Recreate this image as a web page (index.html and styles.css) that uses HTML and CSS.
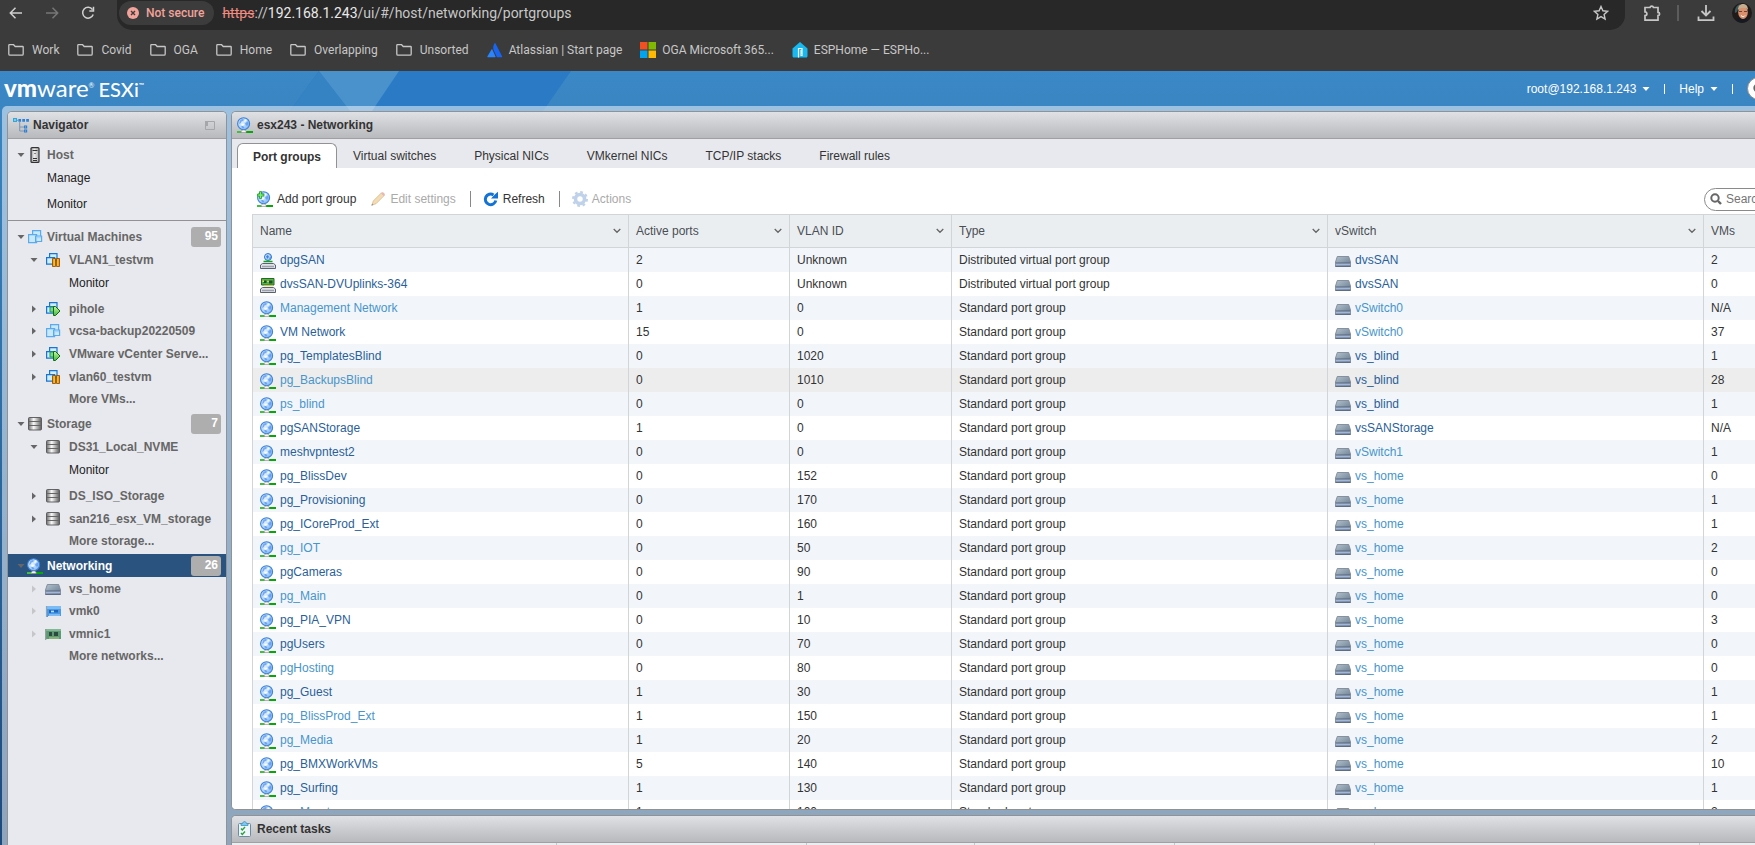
FILE: index.html
```html
<!DOCTYPE html>
<html lang="en">
<head>
<meta charset="utf-8">
<title>esx243 - Networking</title>
<link rel="stylesheet" href="styles.css">
</head>
<body>
<svg class="defs" aria-hidden="true">
  <defs>
    <radialGradient id="gGlobe" cx=".35" cy=".4" r=".75"><stop offset="0" stop-color="#e4f2ff"/><stop offset=".55" stop-color="#a9d2fb"/><stop offset="1" stop-color="#6faaf2"/></radialGradient>
    <linearGradient id="gDisk" x1="0" x2="1" y1="0" y2="0"><stop offset="0" stop-color="#6b6b6b"/><stop offset=".4" stop-color="#fafafa"/><stop offset="1" stop-color="#5c5c5c"/></linearGradient>
    <linearGradient id="gSwitch" x1="0" x2="1" y1="0" y2="1"><stop offset="0" stop-color="#b4c2ce"/><stop offset="1" stop-color="#64788c"/></linearGradient>
    <linearGradient id="gHost" x1="0" x2="1" y1="0" y2="0"><stop offset="0" stop-color="#999"/><stop offset=".4" stop-color="#eee"/><stop offset="1" stop-color="#aaa"/></linearGradient>
    <linearGradient id="gOrange" x1="0" x2="1" y1="0" y2="0"><stop offset="0" stop-color="#f09800"/><stop offset=".5" stop-color="#ffd64a"/><stop offset="1" stop-color="#f09000"/></linearGradient>
    <linearGradient id="gGreen" x1="0" x2="0" y1="0" y2="1"><stop offset="0" stop-color="#c8f5a0"/><stop offset="1" stop-color="#3fba3f"/></linearGradient>
    <symbol id="globe" viewBox="0 0 16 16"><circle cx="6.600" cy="6.700" r="6" fill="url(#gGlobe)" stroke="#3d82d6" stroke-width="1.100"/><path d="M3 3.500 5 2 7 2.500 6 4 4.500 4.500 4 6 2 7zM8 6.500 10.500 4.500 11.500 6.500 10.500 8.500 9 8.500zM4 9.500 6 8.800 7.500 11 5.500 11.500z" fill="#5a93ea" opacity=".75"/><path d="m8 2 2 1-1 1.500-2 .5zM4 7l3-.5.5 1.500L5 9z" fill="#fff" opacity=".85"/><path d="M0 14h5v2H0z" fill="#3fc03f"/><path d="M9 14h7v2H9z" fill="#06a806"/><path d="M4.200 14.600 5.300 13h2.700l1.100 1.600v.9H4.200z" fill="#f4f4f4" stroke="#888" stroke-width=".6"/></symbol>
    <symbol id="globe-add" viewBox="0 0 16 16"><use href="#globe" x="0" y="0" width="16" height="16"/><path d="M2.500 .6h2v2.500h2.400v2H4.500v2.400h-2V5.100H.4v-2h2.100z" fill="#7cec7c" stroke="#1e9a1e" stroke-width=".8"/></symbol>
    <symbol id="dpg" viewBox="0 0 16 16"><circle cx="8" cy="4" r="3.500" fill="url(#gGlobe)" stroke="#2f74c8"/><path d="m6 3 2-1 1 2-2 2zM9 5l2-1-1 2z" fill="#3f7fe0"/><path d="M3.500 8.500h9" stroke="#15a315" stroke-width="1.500"/><path d="M2.500 10.500h11l2 1.500v3.500H.5V12z" fill="#dfe2e8" stroke="#5a6170"/><path d="M2.500 13.500h11" stroke="#5a6070" stroke-width="1.600" stroke-dasharray="1 1"/></symbol>
    <symbol id="uplink" viewBox="0 0 16 16"><path d="M1.500 1.500h12.500v6.500H1.500z" fill="#57b34b" stroke="#256b20"/><path d="M3.500 3.500h3v2.500h-3zM9 3.500h3.500v3H9z" fill="#1d4f2a"/><path d="M2.500 3.500h1.500v1.500H2.500z" fill="#e6e95b"/><path d="M7 4.500h2M4 8.800h9" stroke="#e6c94b"/><path d="M2.500 10.500h11l2 1.500v3.500H.5V12z" fill="#dfe2e8" stroke="#5a6170"/><path d="M2.500 13.500h11" stroke="#5a6070" stroke-width="1.600" stroke-dasharray="1 1"/></symbol>
    <symbol id="switch" viewBox="0 0 16 16"><path d="M2.300 3.500h11.400L15.500 9v4.500H.5V9z" fill="url(#gSwitch)" stroke="#7d8996" stroke-width=".9"/><path d="M.8 10h14.400v2.500H.8z" fill="#a3b6da"/><path d="M.5 13.300h15M.8 10h14.400" stroke="#56657a" stroke-width="1"/></symbol>
    <symbol id="vm" viewBox="0 0 16 16"><g fill="#c8e8fb" stroke="#5aaaf0" stroke-width="1.200"><path d="M5.600 1.600h8v7h-8z"/><path d="M1.600 5.600h8v8h-8z"/><path d="M8.600 7h6v5.500h-6z" fill-opacity=".7"/></g></symbol>
    <symbol id="vm-base" viewBox="0 0 16 16"><g fill="#cdeefa" stroke="#1b74d0" stroke-width="1.200"><path d="M4.600 1.600h7.400v7H4.600z"/><path d="M1.600 5.600h8v6.500h-8z"/></g></symbol>
    <symbol id="vm-pause" viewBox="0 0 16 16"><use href="#vm-base"/><path d="M7.500 6.500h3v8h-3zM11.500 6.500h3v8h-3z" fill="url(#gOrange)" stroke="#8a4400" stroke-width=".8"/></symbol>
    <symbol id="vm-play" viewBox="0 0 16 16"><use href="#vm-base"/><path d="M5 6h5v5H5z" fill="#7ad98e" stroke="#1c9a60"/><path d="M8.500 5.500h2l4.500 4.500-4.500 4.500h-2z" fill="url(#gGreen)" stroke="#0e6b14"/></symbol>
    <symbol id="disk" viewBox="0 0 16 16"><rect x="1.500" y="1.500" width="13" height="12.500" rx="1" fill="url(#gDisk)" stroke="#555" stroke-width=".9"/><path d="M2 5.500h12M2 9.500h12" stroke="#666"/></symbol>
    <symbol id="host" viewBox="0 0 16 16"><rect x="4" y=".6" width="8" height="14.800" rx="1" fill="url(#gHost)" stroke="#333" stroke-width="1.200"/><path d="M5.500 3.500h5M6 11.500h4M6 13.500h4" stroke="#333"/><path d="M7.500 6h1v1h-1z" fill="#222"/></symbol>
    <symbol id="vmk" viewBox="0 0 16 16"><path d="M1 3h15v10H3v1H1z" fill="#4a9ae6"/><path d="M1 3h15v3H1z" fill="#7cbcf2"/><path d="M4 7h2v3H4zM9 7h4v2.500H9z" fill="#1f64b8"/><path d="M6 8.500h3M4 12h11" stroke="#b6dcff"/><path d="M1.500 3v11" stroke="#90a4b8" stroke-width="1.200"/></symbol>
    <symbol id="vmnic" viewBox="0 0 16 16"><path d="M1 3h15v10H1z" fill="#5b9a73"/><path d="M1 3h15v2H1z" fill="#84b894"/><path d="M4 6h3v4H4zM9 6h4v4H9z" fill="#2c4a40"/><path d="M4 12h10" stroke="#b9c97a"/><path d="M.7 3v11" stroke="#8a9a94" stroke-width="1.200"/></symbol>
    <symbol id="folder" viewBox="0 0 16 16"><path d="M.8 12V3.300c0-.4.300-.6.600-.6h4.200l1.600 1.800h7.400c.4 0 .6.300.6.600V12c0 .7-.4 1.200-1.100 1.200H1.900C1.200 13.200.8 12.700.8 12z" fill="none" stroke="#c7c7c7" stroke-width="1.300"/></symbol>
    <symbol id="chevron" viewBox="0 0 8 6"><path d="M.7 1 4 4.300 7.300 1" fill="none" stroke="#666" stroke-width="1.300"/></symbol>
    <symbol id="down" viewBox="0 0 8 8"><path d="M.5 2h7L4 6z" fill="currentColor"/></symbol>
    <symbol id="right" viewBox="0 0 8 8"><path d="M2 .5v7l4-3.500z" fill="currentColor"/></symbol>
    <symbol id="lens" viewBox="0 0 12 12"><circle cx="5" cy="5" r="3.700" fill="none" stroke="#666" stroke-width="2"/><path d="m8 8 3 3" stroke="#666" stroke-width="2.400"/></symbol>
  </defs>
</svg>

<header class="browser">
  <div class="toolbar">
    <button class="nav-btn" aria-label="Back"><svg viewBox="0 0 14 14"><path d="M13 7H1.500M6.500 1.800 1.300 7l5.200 5.200" fill="none" stroke="#d0d0d0" stroke-width="1.500"/></svg></button>
    <button class="nav-btn" aria-label="Forward" disabled><svg viewBox="0 0 14 14"><path d="M1 7h11.500M7.500 1.800 12.700 7l-5.200 5.200" fill="none" stroke="#777" stroke-width="1.500"/></svg></button>
    <button class="nav-btn" aria-label="Reload"><svg viewBox="0 0 14 14"><path d="M12.200 8.500A5.400 5.400 0 1 1 11.500 3.600M12.500.8v4.200H8.300" fill="none" stroke="#d0d0d0" stroke-width="1.500"/></svg></button>
    <div class="omnibox">
      <button class="secure-chip"><svg viewBox="0 0 12 12"><circle cx="6" cy="6" r="6" fill="#f2a39a"/><path d="m4 4 4 4M8 4 4 8" stroke="#3c3c3c" stroke-width="1.400"/></svg>Not secure</button>
      <div class="url"><s>https</s>://<span class="domain">192.168.1.243</span>/ui/#/host/networking/portgroups</div>
      <button class="star" aria-label="Bookmark this page"><svg viewBox="0 0 16 16"><path d="m8 1.500 1.900 4.300 4.700.5-3.500 3.100 1 4.600L8 11.600 3.900 14l1-4.600L1.400 6.300l4.700-.5z" fill="none" stroke="#c7c7c7" stroke-width="1.400"/></svg></button>
    </div>
    <button class="tool" aria-label="Extensions"><svg viewBox="0 0 18 18"><path d="M2 3.500h5a1.800 1.800 0 0 1 3.500 0H15v4.800a1.600 1.600 0 0 1 0 3.200v4.700H2v-4.500a1.900 1.900 0 0 0 0-3.800z" fill="none" stroke="#c7c7c7" stroke-width="1.700"/></svg></button>
    <span class="tool-sep"></span>
    <button class="tool" aria-label="Downloads"><svg viewBox="0 0 18 18"><path d="M9 1v10M4.500 7 9 11.500 13.500 7M1.500 12.500v3.700h15v-3.700" fill="none" stroke="#c7c7c7" stroke-width="1.800"/></svg></button>
    <button class="avatar" aria-label="Profile"><svg viewBox="0 0 20 20"><circle cx="10" cy="10" r="10" fill="#1f1b1a"/><path d="M3 10c-1-4 2-8 5-9l-3 8z" fill="#3d5a5c"/><path d="M4 17.500c1-2 3-3 6-3s5 1 6 3a10 10 0 0 1-12 0z" fill="#151a22"/><ellipse cx="11" cy="9.500" rx="4.800" ry="6.500" fill="#d9906c"/><path d="M6 7c0-4 2-6 5-6s5 2 5 6c-2-3-7-3-10 0z" fill="#c4ad8e"/><path d="M7 8.500h3M12 8.500h3" stroke="#6a4238"/><path d="M9 12.500c1.500 1.500 3 1.500 4 0" stroke="#fff" fill="none"/></svg></button>
  </div>
  <nav class="bookmarks" aria-label="Bookmarks">
    <a href="#"><svg><use href="#folder"/></svg>Work</a>
    <a href="#"><svg><use href="#folder"/></svg>Covid</a>
    <a href="#"><svg><use href="#folder"/></svg>OGA</a>
    <a href="#"><svg><use href="#folder"/></svg>Home</a>
    <a href="#"><svg><use href="#folder"/></svg>Overlapping</a>
    <a href="#"><svg><use href="#folder"/></svg>Unsorted</a>
    <a class="site" href="#"><svg viewBox="0 0 16 16"><path d="M4.500 7.500c.3-.3.600-.2.800.1l3.200 7c.1.300 0 .6-.4.600H.8c-.4 0-.6-.3-.4-.7z" fill="#2a86ff"/><path d="M7.600 1.200c-1.800 2.800-1.700 5.500-.6 7.800l2.900 5.900c.1.200.3.300.5.300h4.300c.4 0 .6-.4.500-.7L8.400 1.200c-.2-.3-.6-.3-.8 0z" fill="#1765f0"/></svg>Atlassian | Start page</a>
    <a class="site" href="#"><svg viewBox="0 0 16 16"><path d="M0 0h7.500v7.500H0z" fill="#f25022"/><path d="M8.500 0H16v7.500H8.500z" fill="#7fba00"/><path d="M0 8.500h7.500V16H0z" fill="#00a4ef"/><path d="M8.500 8.500H16V16H8.500z" fill="#ffb900"/></svg>OGA Microsoft 365...</a>
    <a class="site" href="#"><svg viewBox="0 0 16 16"><path d="M8 0 .5 6.500V14c0 .8.500 1.500 1.300 1.500h12.400c.8 0 1.300-.7 1.300-1.500V6.500z" fill="#19b8ee"/><path d="M6.500 15.500V6.500H10v7h-1M8 9h2M8 11h2M8 13h1" fill="none" stroke="#fff" stroke-width="1.200"/></svg>ESPHome — ESPHo...</a>
  </nav>
</header>

<div class="app">
  <svg class="facets" viewBox="0 0 600 40" aria-hidden="true"><path d="M319 0H571L543 40H290z" fill="#2a7ac5"/><path d="M319 0 290 40H350z" fill="#3583c3"/><path d="M319 0H399L372 40H350z" fill="#4a92cc"/></svg>
  <header class="masthead">
    <div class="logo"><span class="logo-vm"><b>vm</b>ware<sup>®</sup></span> <span class="logo-esx">ESXi<sup>™</sup></span></div>
    <div class="session">
      <button>root@192.168.1.243<svg><use href="#down"/></svg></button><i></i>
      <button>Help<svg><use href="#down"/></svg></button><i></i>
      <label class="pill"><svg><use href="#lens"/></svg><input type="search" aria-label="Search inventory" placeholder="Search"></label>
    </div>
  </header>

  <div class="frame">
    <aside class="panel navigator">
      <h2 class="panel-title"><svg viewBox="0 0 16 16"><g fill="none" stroke="#2b7fd4" stroke-width="1.200"><path d="M.6 1.600h2.800v2.800H.6z" stroke="#29abe2"/><path d="M6 2.600h1.500v1.500H6zM9.900 2.600h1.500v1.500H9.900zM13.800 2.600h1.500v1.500h-1.500zM11.600 9h2v2h-2zM11.600 13h2v2h-2z"/></g><path d="M4 3.300h2M6.700 5v9h4.500M6.700 10h4.500" fill="none" stroke="#7d96b4"/></svg>Navigator<button class="dock" aria-label="Collapse navigator"><svg viewBox="0 0 10 9"><path d="M.5.5h9v8h-9z" fill="none" stroke="#a4a6aa"/><path d="M0 0h3v5H0z" fill="#a4a6aa"/></svg></button></h2>
      <div class="tree host-tree">
        <div class="row"><svg class="caret"><use href="#down"/></svg><svg class="icon"><use href="#host"/></svg><a href="#">Host</a></div>
        <div class="row leaf"><a href="#">Manage</a></div>
        <div class="row leaf last"><a href="#">Monitor</a></div>
      </div>
      <div class="tree">
        <div class="row"><svg class="caret"><use href="#down"/></svg><svg class="icon"><use href="#vm"/></svg><a href="#">Virtual Machines</a><span class="badge">95</span></div>
        <div class="row sub"><svg class="caret"><use href="#down"/></svg><svg class="icon"><use href="#vm-pause"/></svg><a href="#">VLAN1_testvm</a></div>
        <div class="row sub leaf"><a href="#">Monitor</a></div>
        <div class="row sub"><svg class="caret"><use href="#right"/></svg><svg class="icon"><use href="#vm-play"/></svg><a href="#">pihole</a></div>
        <div class="row sub tight"><svg class="caret"><use href="#right"/></svg><svg class="icon"><use href="#vm"/></svg><a href="#">vcsa-backup20220509</a></div>
        <div class="row sub"><svg class="caret"><use href="#right"/></svg><svg class="icon"><use href="#vm-play"/></svg><a href="#">VMware vCenter Serve...</a></div>
        <div class="row sub"><svg class="caret"><use href="#right"/></svg><svg class="icon"><use href="#vm-pause"/></svg><a href="#">vlan60_testvm</a></div>
        <div class="row sub more tight"><a href="#">More VMs...</a></div>
      </div>
      <div class="tree">
        <div class="row"><svg class="caret"><use href="#down"/></svg><svg class="icon"><use href="#disk"/></svg><a href="#">Storage</a><span class="badge">7</span></div>
        <div class="row sub"><svg class="caret"><use href="#down"/></svg><svg class="icon"><use href="#disk"/></svg><a href="#">DS31_Local_NVME</a></div>
        <div class="row sub leaf"><a href="#">Monitor</a></div>
        <div class="row sub"><svg class="caret"><use href="#right"/></svg><svg class="icon"><use href="#disk"/></svg><a href="#">DS_ISO_Storage</a></div>
        <div class="row sub"><svg class="caret"><use href="#right"/></svg><svg class="icon"><use href="#disk"/></svg><a href="#">san216_esx_VM_storage</a></div>
        <div class="row sub more tight"><a href="#">More storage...</a></div>
      </div>
      <div class="tree faint">
        <div class="row selected"><svg class="caret"><use href="#down"/></svg><svg class="icon"><use href="#globe"/></svg><a href="#">Networking</a><span class="badge">26</span></div>
        <div class="row sub"><svg class="caret"><use href="#right"/></svg><svg class="icon"><use href="#switch"/></svg><a href="#">vs_home</a></div>
        <div class="row sub tight"><svg class="caret"><use href="#right"/></svg><svg class="icon"><use href="#vmk"/></svg><a href="#">vmk0</a></div>
        <div class="row sub"><svg class="caret"><use href="#right"/></svg><svg class="icon"><use href="#vmnic"/></svg><a href="#">vmnic1</a></div>
        <div class="row sub more tight"><a href="#">More networks...</a></div>
      </div>
    </aside>

    <div class="workspace">
      <main class="panel content">
        <h1 class="panel-title"><svg><use href="#globe"/></svg>esx243 - Networking</h1>
        <div class="tabs" role="tablist">
          <button role="tab" aria-selected="true" class="active">Port groups</button>
          <button role="tab">Virtual switches</button>
          <button role="tab">Physical NICs</button>
          <button role="tab">VMkernel NICs</button>
          <button role="tab">TCP/IP stacks</button>
          <button role="tab">Firewall rules</button>
        </div>
        <div class="view">
          <div class="actions">
            <button><svg><use href="#globe-add"/></svg>Add port group</button>
            <button disabled><svg viewBox="0 0 16 16"><path d="m2 14 1.300-4L11.500 1.800l2.700 2.700L6 12.700z" fill="#f3dcb4" stroke="#d9b98a" stroke-width=".8"/><path d="m11 2.300 1-1c1-.8 3.500 1.500 2.700 2.700l-1 1z" fill="#e9b6b6"/><path d="m1.300 14.800.8-2 1.200 1.200z" fill="#888"/></svg>Edit settings</button><i></i>
            <button><svg viewBox="0 0 16 16"><path d="M12.800 9.500A5.300 5.300 0 1 1 10.500 3.900" fill="none" stroke="#1272d6" stroke-width="3"/><path d="M8 7.500h7V.8L12.300 3z" fill="#1272d6"/></svg>Refresh</button><i></i>
            <button disabled><svg viewBox="0 0 16 16"><circle cx="8" cy="8" r="4.500" fill="none" stroke="#c0d2ea" stroke-width="3.600"/><circle cx="8" cy="8" r="6.800" fill="none" stroke="#c0d2ea" stroke-width="2.400" stroke-dasharray="2.670 2.670"/></svg>Actions</button>
            <label class="pill"><svg><use href="#lens"/></svg><input type="search" aria-label="Search port groups" placeholder="Search"></label>
          </div>
          <table class="grid">
            <colgroup><col class="wide"><col class="ports"><col class="vlan"><col class="wide"><col class="wide"><col></colgroup>
            <thead><tr><th>Name<svg><use href="#chevron"/></svg></th><th>Active ports<svg><use href="#chevron"/></svg></th><th>VLAN ID<svg><use href="#chevron"/></svg></th><th>Type<svg><use href="#chevron"/></svg></th><th>vSwitch<svg><use href="#chevron"/></svg></th><th>VMs</th></tr></thead>
            <tbody>
              <tr><td><svg><use href="#dpg"/></svg><a href="#">dpgSAN</a></td><td>2</td><td>Unknown</td><td>Distributed virtual port group</td><td><svg><use href="#switch"/></svg><a href="#">dvsSAN</a></td><td>2</td></tr>
              <tr><td><svg><use href="#uplink"/></svg><a href="#">dvsSAN-DVUplinks-364</a></td><td>0</td><td>Unknown</td><td>Distributed virtual port group</td><td><svg><use href="#switch"/></svg><a href="#">dvsSAN</a></td><td>0</td></tr>
              <tr><td><svg><use href="#globe"/></svg><a class="lit" href="#">Management Network</a></td><td>1</td><td>0</td><td>Standard port group</td><td><svg><use href="#switch"/></svg><a class="lit" href="#">vSwitch0</a></td><td>N/A</td></tr>
              <tr><td><svg><use href="#globe"/></svg><a href="#">VM Network</a></td><td>15</td><td>0</td><td>Standard port group</td><td><svg><use href="#switch"/></svg><a class="lit" href="#">vSwitch0</a></td><td>37</td></tr>
              <tr><td><svg><use href="#globe"/></svg><a href="#">pg_TemplatesBlind</a></td><td>0</td><td>1020</td><td>Standard port group</td><td><svg><use href="#switch"/></svg><a href="#">vs_blind</a></td><td>1</td></tr>
              <tr class="hover"><td><svg><use href="#globe"/></svg><a class="lit" href="#">pg_BackupsBlind</a></td><td>0</td><td>1010</td><td>Standard port group</td><td><svg><use href="#switch"/></svg><a href="#">vs_blind</a></td><td>28</td></tr>
              <tr><td><svg><use href="#globe"/></svg><a class="lit" href="#">ps_blind</a></td><td>0</td><td>0</td><td>Standard port group</td><td><svg><use href="#switch"/></svg><a href="#">vs_blind</a></td><td>1</td></tr>
              <tr><td><svg><use href="#globe"/></svg><a href="#">pgSANStorage</a></td><td>1</td><td>0</td><td>Standard port group</td><td><svg><use href="#switch"/></svg><a href="#">vsSANStorage</a></td><td>N/A</td></tr>
              <tr><td><svg><use href="#globe"/></svg><a href="#">meshvpntest2</a></td><td>0</td><td>0</td><td>Standard port group</td><td><svg><use href="#switch"/></svg><a class="lit" href="#">vSwitch1</a></td><td>1</td></tr>
              <tr><td><svg><use href="#globe"/></svg><a href="#">pg_BlissDev</a></td><td>0</td><td>152</td><td>Standard port group</td><td><svg><use href="#switch"/></svg><a class="lit" href="#">vs_home</a></td><td>0</td></tr>
              <tr><td><svg><use href="#globe"/></svg><a href="#">pg_Provisioning</a></td><td>0</td><td>170</td><td>Standard port group</td><td><svg><use href="#switch"/></svg><a class="lit" href="#">vs_home</a></td><td>1</td></tr>
              <tr><td><svg><use href="#globe"/></svg><a href="#">pg_ICoreProd_Ext</a></td><td>0</td><td>160</td><td>Standard port group</td><td><svg><use href="#switch"/></svg><a class="lit" href="#">vs_home</a></td><td>1</td></tr>
              <tr><td><svg><use href="#globe"/></svg><a class="lit" href="#">pg_IOT</a></td><td>0</td><td>50</td><td>Standard port group</td><td><svg><use href="#switch"/></svg><a class="lit" href="#">vs_home</a></td><td>2</td></tr>
              <tr><td><svg><use href="#globe"/></svg><a href="#">pgCameras</a></td><td>0</td><td>90</td><td>Standard port group</td><td><svg><use href="#switch"/></svg><a class="lit" href="#">vs_home</a></td><td>0</td></tr>
              <tr><td><svg><use href="#globe"/></svg><a class="lit" href="#">pg_Main</a></td><td>0</td><td>1</td><td>Standard port group</td><td><svg><use href="#switch"/></svg><a class="lit" href="#">vs_home</a></td><td>0</td></tr>
              <tr><td><svg><use href="#globe"/></svg><a href="#">pg_PIA_VPN</a></td><td>0</td><td>10</td><td>Standard port group</td><td><svg><use href="#switch"/></svg><a class="lit" href="#">vs_home</a></td><td>3</td></tr>
              <tr><td><svg><use href="#globe"/></svg><a href="#">pgUsers</a></td><td>0</td><td>70</td><td>Standard port group</td><td><svg><use href="#switch"/></svg><a class="lit" href="#">vs_home</a></td><td>0</td></tr>
              <tr><td><svg><use href="#globe"/></svg><a class="lit" href="#">pgHosting</a></td><td>0</td><td>80</td><td>Standard port group</td><td><svg><use href="#switch"/></svg><a class="lit" href="#">vs_home</a></td><td>0</td></tr>
              <tr><td><svg><use href="#globe"/></svg><a href="#">pg_Guest</a></td><td>1</td><td>30</td><td>Standard port group</td><td><svg><use href="#switch"/></svg><a class="lit" href="#">vs_home</a></td><td>1</td></tr>
              <tr><td><svg><use href="#globe"/></svg><a class="lit" href="#">pg_BlissProd_Ext</a></td><td>1</td><td>150</td><td>Standard port group</td><td><svg><use href="#switch"/></svg><a class="lit" href="#">vs_home</a></td><td>1</td></tr>
              <tr><td><svg><use href="#globe"/></svg><a class="lit" href="#">pg_Media</a></td><td>1</td><td>20</td><td>Standard port group</td><td><svg><use href="#switch"/></svg><a class="lit" href="#">vs_home</a></td><td>2</td></tr>
              <tr><td><svg><use href="#globe"/></svg><a href="#">pg_BMXWorkVMs</a></td><td>5</td><td>140</td><td>Standard port group</td><td><svg><use href="#switch"/></svg><a class="lit" href="#">vs_home</a></td><td>10</td></tr>
              <tr><td><svg><use href="#globe"/></svg><a href="#">pg_Surfing</a></td><td>1</td><td>130</td><td>Standard port group</td><td><svg><use href="#switch"/></svg><a class="lit" href="#">vs_home</a></td><td>1</td></tr>
              <tr><td><svg><use href="#globe"/></svg><a class="lit" href="#">pg_Mgmt</a></td><td>1</td><td>100</td><td>Standard port group</td><td><svg><use href="#switch"/></svg><a class="lit" href="#">vs_home</a></td><td>2</td></tr>
            </tbody>
          </table>
        </div>
      </main>
      <section class="panel tasks">
        <h2 class="panel-title"><svg viewBox="0 0 16 16"><rect x="1.500" y="2.500" width="12" height="13" rx="1" fill="#eef6fb" stroke="#6c8aa0"/><path d="M4 4.500V3l2-1c0-2 3-2 3 0l2 1v1.500z" fill="#7cc8ee" stroke="#3f94c4" stroke-width=".8"/><path d="m4 7.500 1.300 1.500L8 6M4 12l1.300 1.500L8 10.500" fill="none" stroke="#2aa33c" stroke-width="1.400"/></svg>Recent tasks</h2>
        <div class="task-columns"><span class="c1"></span><span class="c2"></span><span class="c3"></span><span class="c4"></span><span class="c4"></span><span class="c1"></span></div>
      </section>
    </div>
  </div>
</div>
</body>
</html>
```
FILE: styles.css
```css
* { box-sizing: border-box; }
body {
  margin: 0;
  height: 100vh;
  overflow: hidden;
  display: flex;
  flex-direction: column;
  font: 12px/16px "Liberation Sans", Arial, sans-serif;
  color: #333;
}
.defs { position: absolute; width: 0; height: 0; }
svg { display: block; flex: none; width: 16px; height: 16px; }
a { color: inherit; text-decoration: none; }
button { font: inherit; color: inherit; background: none; border: 0; padding: 0; }

/* Browser chrome */
.browser {
  flex: none;
  background: #3b3b3b;
  color: #c7c7c7;
  font-family: Roboto, "Open Sans", sans-serif;
}
.toolbar { display: flex; align-items: flex-start; height: 30px; padding-left: 9px; }
.nav-btn { width: 36px; height: 26px; flex: none; }
.nav-btn svg { width: 14px; height: 14px; }
.omnibox {
  flex: 1;
  display: flex;
  align-items: center;
  height: 30px;
  padding: 0 16px 4px 2px;
  background: #282828;
  border-radius: 0 0 15px 15px;
}
.secure-chip {
  display: flex;
  align-items: center;
  gap: 7px;
  height: 24px;
  padding: 0 10px 0 8px;
  border-radius: 12px;
  background: #3c3c3c;
  color: #f2a39a;
  font-weight: 500;
}
.secure-chip svg { width: 12px; height: 12px; }
.url { flex: 1; margin-left: 8px; font-size: 14px; line-height: 20px; color: #c7c7c7; }
.url s { color: #f28b82; }
.url .domain { color: #e8e8e8; }
.tool { height: 26px; margin-left: 18px; }
.tool svg { width: 18px; height: 18px; }
.tool-sep { width: 2px; height: 16px; margin: 5px 0 0 16px; background: #5c5c5c; }
.avatar { margin: 3px 3px 0 17px; }
.avatar svg { width: 20px; height: 20px; }
.bookmarks { display: flex; align-items: center; gap: 18px; height: 41px; padding: 0 8px 2px; }
.bookmarks a { display: flex; align-items: center; gap: 8px; white-space: nowrap; }
.bookmarks a.site { gap: 6px; }

/* Application shell */
.app {
  position: relative;
  flex: 1;
  min-height: 0;
  display: flex;
  flex-direction: column;
  background: linear-gradient(#3b88c6, #1d4a7c);
}
.facets { position: absolute; top: 0; left: 0; width: 600px; height: 40px; }
.masthead {
  position: relative;
  flex: none;
  display: flex;
  align-items: center;
  justify-content: space-between;
  height: 35px;
  padding-left: 4px;
  color: #fff;
}
.logo { display: flex; align-items: baseline; gap: 4px; font-family: Lato, sans-serif; line-height: 35px; }
.logo sup { font-size: 7px; line-height: 7px; vertical-align: 9px; }
.logo-vm { font-size: 24px; }
.logo-vm b { font-weight: 900; }
.logo-esx { font-size: 20px; font-weight: 500; }
.session { display: flex; align-items: center; }
.session button { display: flex; align-items: center; gap: 6px; }
.session button svg { width: 8px; height: 8px; }
.session i { width: 1px; height: 10px; margin: 0 14px; background: #fff; }
.pill {
  display: flex;
  align-items: center;
  gap: 4px;
  width: 200px;
  height: 23px;
  padding: 0 5px;
  background: #fff;
  border: 1px solid #8a8a8a;
  border-radius: 12px;
}
.pill svg { width: 12px; height: 12px; }
.pill input { flex: 1; min-width: 0; padding: 0; border: 0; outline: 0; background: none; font: inherit; color: #555; }
.pill input::placeholder { color: #757575; }
.session .pill { margin-right: -192px; }

.frame {
  position: relative;
  flex: 1;
  min-height: 0;
  display: flex;
  gap: 4px;
  margin-left: 2px;
  padding: 5px 0 0 5px;
  background: rgba(255, 255, 255, .5);
  border-top-left-radius: 5px;
}
.panel { background: #e8e9ee; border: 1px solid #929292; overflow: hidden; }
.panel-title {
  flex: none;
  display: flex;
  align-items: center;
  height: 27px;
  margin: 0;
  padding: 0 11px 0 5px;
  gap: 4px;
  font-size: 12px;
  font-weight: bold;
  background: linear-gradient(#e0e1e4, #b8b9bd);
  border-bottom: 1px solid #a0a0a2;
}
.dock { margin-left: auto; }
.dock svg { width: 10px; height: 9px; }

/* Navigator */
.navigator { flex: none; width: 220px; border-bottom: 0; border-radius: 5px 5px 0 0; }
.tree { padding-top: 2px; color: #666; font-weight: bold; }
.host-tree { padding: 4px 0 2px; border-bottom: 1px solid #929292; margin-bottom: 2px; }
.row { display: flex; align-items: center; height: 23px; padding: 0 5px 0 9px; white-space: nowrap; }
.row.sub { padding-left: 22px; }
.row.tight { height: 22px; }
.row .caret { width: 8px; height: 8px; margin-right: 2px; color: #666; }
.row.sub .caret { margin-right: 7px; }
.row .icon { margin-right: 4px; }
.row.sub .icon { margin-right: 8px; }
.row.leaf { padding-left: 39px; color: #222; font-weight: normal; }
.row.sub.leaf, .row.more { padding-left: 61px; }
.row.sub.leaf { margin-bottom: 3px; }
.row.last { height: 29px; }
.badge {
  width: 30px;
  height: 20px;
  margin-left: auto;
  padding: 0 3px;
  line-height: 19px;
  text-align: right;
  color: #fff;
  background: #aeaeae;
  border-radius: 3px;
}
.selected { background: #2a5380; color: #fff; }
.faint .sub .caret { color: #c6c6c9; }

/* Main panel */
.workspace { flex: 1; min-width: 0; display: flex; flex-direction: column; gap: 5px; }
.workspace .panel { border-right: 0; border-radius: 5px 0 0 5px; }
.content { flex: 1; min-height: 0; display: flex; flex-direction: column; }
.tabs { flex: none; display: flex; height: 29px; padding: 4px 0 0 5px; }
.tabs button { padding: 1px 19px 0; }
.tabs .active {
  margin-right: -3px;
  padding: 1px 15px 0;
  font-weight: bold;
  background: #fff;
  border: 1px solid #929292;
  border-bottom: 0;
  border-radius: 6px 6px 0 0;
}
.view { flex: 1; min-height: 0; overflow: hidden; background: #fff; padding: 19px 0 0 20px; }
.actions { display: flex; align-items: center; height: 24px; margin-bottom: 3px; padding-left: 5px; }
.actions button { display: flex; align-items: center; gap: 4px; margin-right: 14px; }
.actions button:disabled { color: #aaa; }
.actions i { width: 1px; height: 16px; margin-right: 12px; background: #888; }
.actions .pill { margin: 0 -149px 0 auto; }

.grid { width: 100%; table-layout: fixed; border-collapse: separate; border-spacing: 0; border-top: 1px solid #d2d5d8; }
.grid .wide { width: 376px; }
.grid .ports { width: 161px; }
.grid .vlan { width: 162px; }
.grid th, .grid td { padding: 0 7px; text-align: left; border-left: 1px solid #d2d5d8; white-space: nowrap; overflow: hidden; }
.grid th { height: 33px; font-weight: normal; color: #4a4f55; background: #ebeef1; border-bottom: 1px solid #d2d5d8; }
.grid th svg { float: right; width: 8px; height: 6px; margin-top: 5px; }
.grid td { height: 24px; line-height: 24px; }
.grid td svg { float: left; margin: 5px 4px 0 0; height: 16px; }
.grid tbody tr:nth-child(odd) { background: #f2f6fb; }
.grid tbody tr:nth-child(even) { background: #fff; }
.grid tbody tr.hover { background: #ededed; }
.grid td a { color: #2a5f99; }
.grid td a.lit { color: #4795cb; }

/* Recent tasks */
.tasks { flex: none; }
.workspace .tasks { border-bottom: 0; border-radius: 5px 0 0 0; }
.task-columns { display: flex; height: 2px; background: #ebeef1; }
.task-columns span { flex: none; border-right: 1px solid #c4c7ca; }
.task-columns .c1 { width: 325px; }
.task-columns .c2 { width: 250px; }
.task-columns .c3 { width: 168px; }
.task-columns .c4 { width: 200px; }
```
